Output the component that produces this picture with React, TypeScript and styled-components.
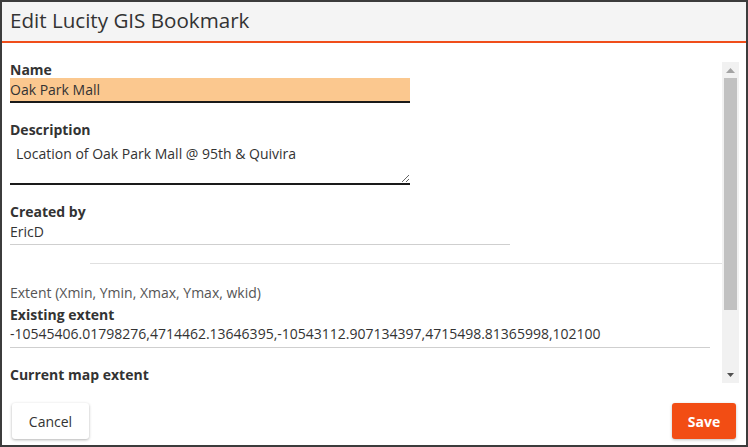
import React from 'react'
import styled, { createGlobalStyle } from 'styled-components'

const GlobalStyle = createGlobalStyle`
  html, body {
    margin: 0;
    padding: 0;
    height: 100%;
    background: #fff;
  }
  #root {
    height: 100%;
  }
  * {
    box-sizing: border-box;
  }
`

const App = () => {
  return (
    <>
      <GlobalStyle />
      <Dialog>
        <Header>
          <Title>Edit Lucity GIS Bookmark</Title>
        </Header>
        <Body>
          <ScrollContent>
            <Label>Name</Label>
            <NameInput defaultValue="Oak Park Mall" />
            <Label $top={19}>Description</Label>
            <DescriptionArea defaultValue="Location of Oak Park Mall @ 95th & Quivira" />
            <Label $top={19}>Created by</Label>
            <ReadOnlyField $width={500} $top={2} $height={24}>EricD</ReadOnlyField>
            <Separator />
            <Hint>Extent (Xmin, Ymin, Xmax, Ymax, wkid)</Hint>
            <Label $top={6}>Existing extent</Label>
            <ReadOnlyField $width={700} $top={1} $height={24}>
              -10545406.01798276,4714462.13646395,-10543112.907134397,4715498.81365998,102100
            </ReadOnlyField>
            <Label $top={19}>Current map extent</Label>
          </ScrollContent>
          <ScrollTrack>
            <ArrowButton>
              <svg width="9" height="5" viewBox="0 0 9 5">
                <path d="M0 5 L4.5 0 L9 5 Z" fill="#a3a3a3" />
              </svg>
            </ArrowButton>
            <Thumb />
            <TrackFill />
            <ArrowButton>
              <svg width="7" height="4" viewBox="0 0 7 4">
                <path d="M0 0 L7 0 L3.5 4 Z" fill="#505050" />
              </svg>
            </ArrowButton>
          </ScrollTrack>
        </Body>
        <Footer>
          <CancelButton>Cancel</CancelButton>
          <SaveButton>Save</SaveButton>
        </Footer>
      </Dialog>
    </>
  )
}

const Dialog = styled.div`
  display: flex;
  flex-direction: column;
  height: 100%;
  border: 2px solid #3c3c3c;
  background: #fff;
  font-family: "Open Sans", "Liberation Sans", sans-serif;
  color: #333;
`

const Header = styled.div`
  display: flex;
  align-items: center;
  height: 41px;
  padding: 0 8px 3px;
  background: #f4f4f4;
  border-bottom: 2px solid #f04e1a;
  flex-shrink: 0;
`

const Title = styled.h1`
  margin: 0;
  font-size: 20.6px;
  font-weight: 400;
  color: #333;
`

const Body = styled.div`
  display: flex;
  padding: 19px 7px 0 8px;
  height: 340px;
  flex-shrink: 0;
`

const ScrollContent = styled.div`
  flex: 1;
  height: 321px;
  display: flex;
  flex-direction: column;
  align-items: flex-start;
`

const Label = styled.div<{ $top?: number }>`
  margin-top: ${(p) => p.$top ?? 0}px;
  font-size: 14px;
  font-weight: 700;
  line-height: 16px;
  color: #333;
`

const NameInput = styled.input`
  width: 400px;
  height: 25px;
  margin: 0;
  padding: 0;
  border: none;
  border-bottom: 2px solid #1a1a1a;
  background: #fbc88f;
  font-family: inherit;
  font-size: 14px;
  color: #333;
  outline: none;
`

const DescriptionArea = styled.textarea`
  width: 400px;
  height: 47px;
  margin: 1px 0 0;
  padding: 5px 6px 0;
  border: none;
  border-bottom: 2px solid #1a1a1a;
  background: #fff;
  font-family: inherit;
  font-size: 14px;
  line-height: 19px;
  color: #333;
  outline: none;
  resize: vertical;
  display: block;
`

const ReadOnlyField = styled.div<{ $width: number; $top: number; $height: number }>`
  width: ${(p) => p.$width}px;
  margin-top: ${(p) => p.$top}px;
  height: ${(p) => p.$height}px;
  font-size: 14px;
  line-height: 20px;
  color: #333;
  border-bottom: 1px solid #cfcfcf;
  white-space: nowrap;
`

const Separator = styled.div`
  align-self: stretch;
  margin: 18px 0 0 80px;
  border-top: 1px solid #e0e0e0;
`

const Hint = styled.div`
  margin-top: 21px;
  font-size: 14px;
  line-height: 16px;
  color: #555;
`

const ScrollTrack = styled.div`
  width: 17px;
  height: 321px;
  display: flex;
  flex-direction: column;
  align-items: center;
  background: #f1f1f1;
  flex-shrink: 0;
`

const ArrowButton = styled.div`
  height: 16px;
  width: 100%;
  display: flex;
  align-items: center;
  justify-content: center;
`

const Thumb = styled.div`
  width: 13px;
  height: 232px;
  background: #c1c1c1;
`

const TrackFill = styled.div`
  flex: 1;
`

const Footer = styled.div`
  display: flex;
  justify-content: space-between;
  align-items: flex-start;
  padding: 20px 10px 0;
  flex: 1;
`

const BaseButton = styled.button`
  height: 36px;
  border: none;
  border-radius: 3px;
  font-family: inherit;
  font-size: 14px;
  cursor: pointer;
`

const CancelButton = styled(BaseButton)`
  width: 77px;
  background: #fff;
  color: #333;
  box-shadow: 0 1px 3px rgba(0, 0, 0, 0.3);
`

const SaveButton = styled(BaseButton)`
  width: 64px;
  background: #f24d14;
  color: #fff;
  font-weight: 700;
  box-shadow: 0 1px 3px rgba(0, 0, 0, 0.25);
`

export default App
